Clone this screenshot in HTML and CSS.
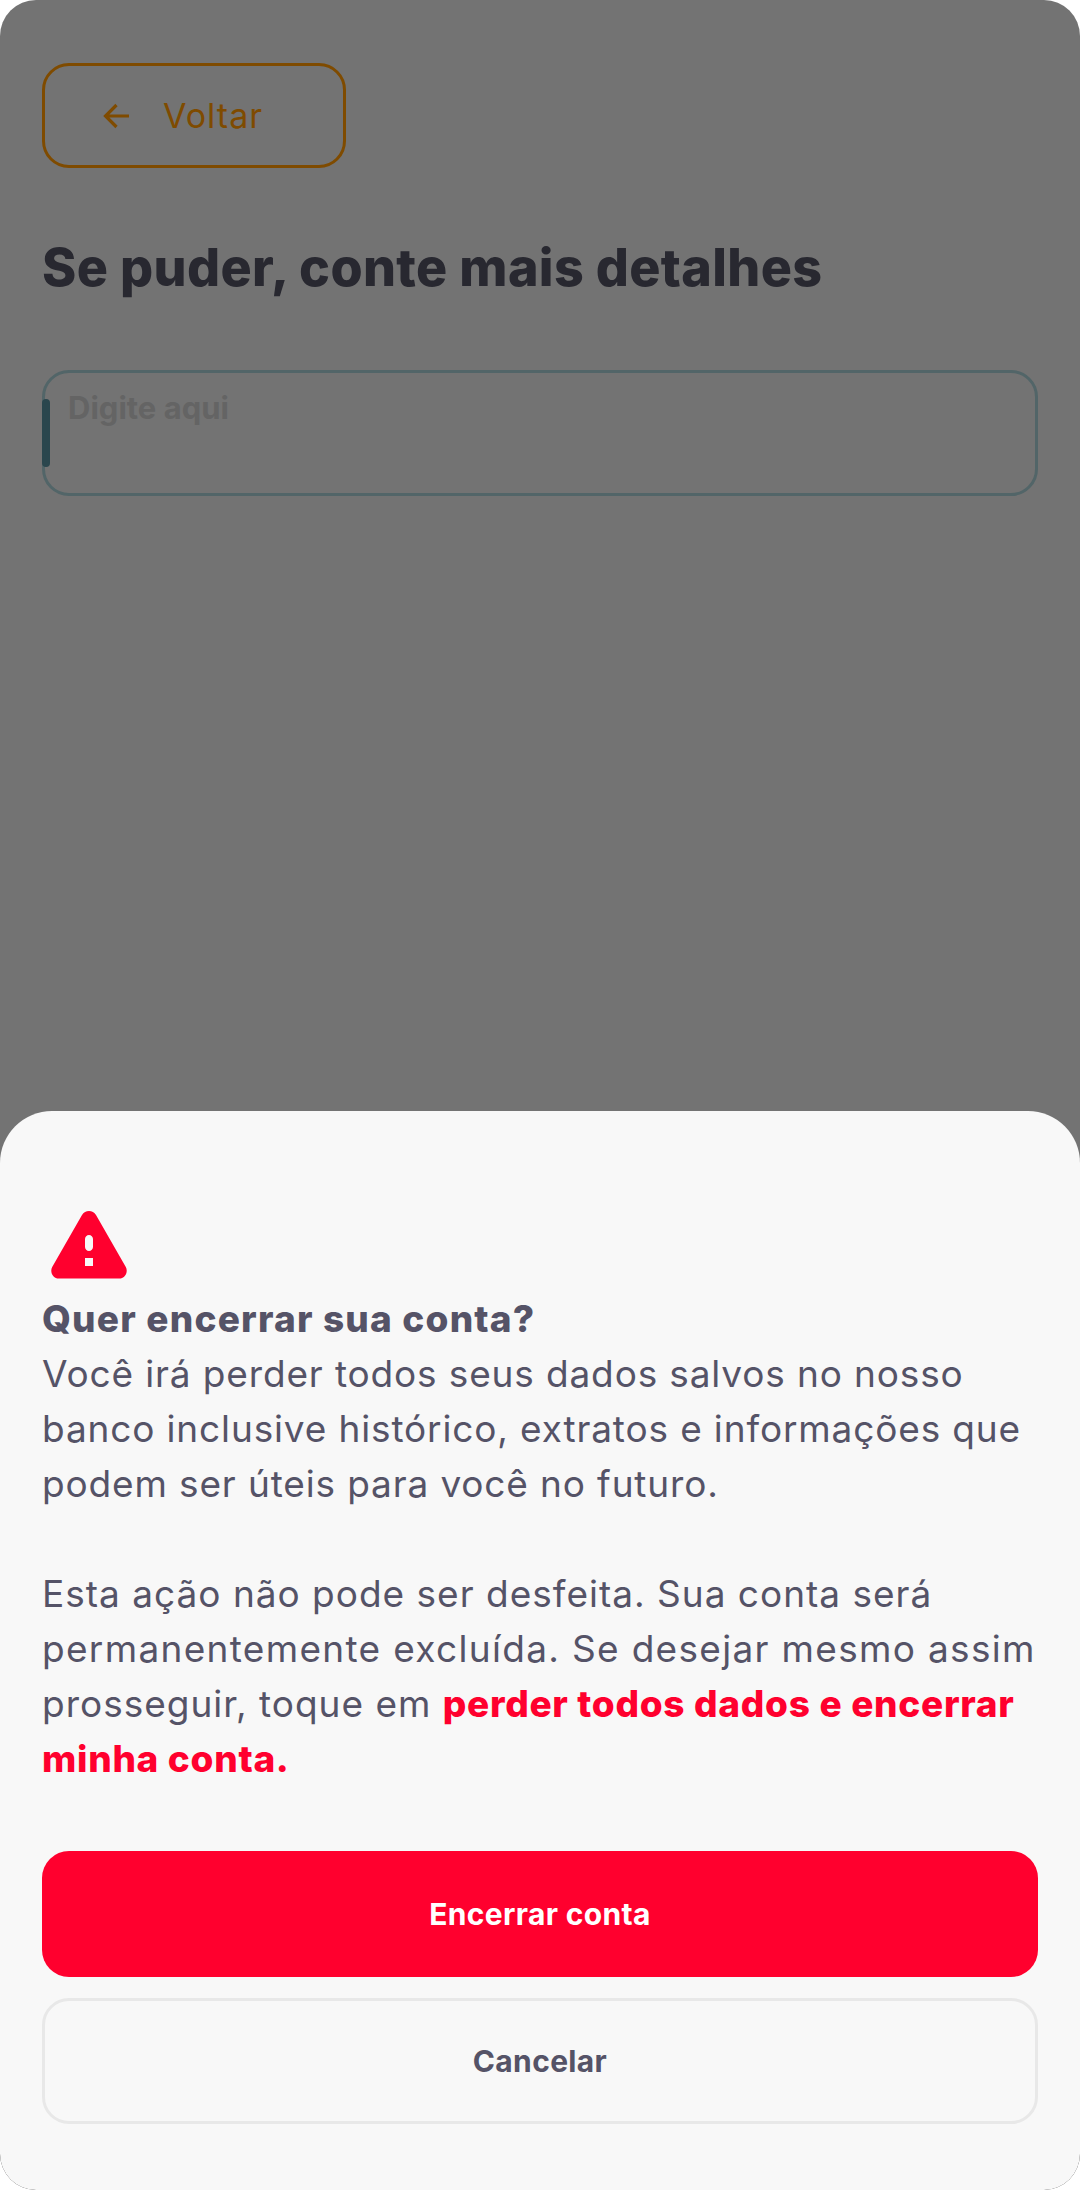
FILE: index.html
```html
<!DOCTYPE html>
<html lang="pt-BR">
<head>
<meta charset="utf-8">
<title>Encerrar conta</title>
<link rel="stylesheet" href="styles.css">
</head>
<body>
<div class="screen">
  <main class="page">
    <button class="back">
      <svg class="back-icon" viewBox="0 0 28 28" width="28" height="28" aria-hidden="true"><path d="M26 14H3M13.500 3 2.500 14l11 11" fill="none" stroke="currentColor" stroke-width="3.200"/></svg>
      <span>Voltar</span>
    </button>
    <h1 class="title">Se puder, conte mais detalhes</h1>
    <div class="field">
      <span class="caret"></span>
      <span class="placeholder">Digite aqui</span>
    </div>
  </main>
  <section class="sheet">
    <svg class="warn" viewBox="0 0 76 68" width="76" height="68" aria-hidden="true">
      <path fill-rule="evenodd" d="M31 4C34 -1.300 42 -1.300 45 4L74.800 56C77.500 61 74 67.500 68 67.500H8C2 67.500 -1.500 61 1.200 56ZM34 28V36C34 38.200 35.800 40 38 40S42 38.200 42 36V28C42 25.800 40.200 24 38 24S34 25.800 34 28ZM34 47V55H42V47Z" fill="#ff002e"/>
    </svg>
    <div class="message">
      <strong class="message-title">Quer encerrar sua conta?</strong><br>
      Você irá perder todos seus dados salvos no nosso<br>
      banco inclusive histórico, extratos e informações que<br>
      podem ser úteis para você no futuro.<br>
      <br>
      <span class="line-loose">Esta ação não pode ser desfeita. Sua conta será</span><br>
      <span class="line-wide">permanentemente excluída. Se desejar mesmo assim</span><br>
      <span class="line-loose">prosseguir, toque em</span> <strong class="danger">perder todos dados e encerrar<br>minha conta.</strong>
    </div>
    <div class="actions">
      <button class="btn btn-danger">Encerrar conta</button>
      <button class="btn btn-ghost">Cancelar</button>
    </div>
  </section>
</div>
</body>
</html>
```
FILE: styles.css
```css
* { box-sizing: border-box; }
html, body { margin: 0; padding: 0; background: #fff; }
body { font-family: Inter, "Noto Sans", sans-serif; }
button { font-family: inherit; }

.screen {
  position: relative;
  width: 1080px;
  height: 2190px;
  overflow: hidden;
  background: #737373;
  border-radius: 36px;
}
.page {
  display: flex;
  flex-direction: column;
  align-items: flex-start;
  padding: 63px 42px 0;
}
.back {
  display: flex;
  align-items: center;
  gap: 32px;
  width: 304px;
  height: 105px;
  padding: 0 0 0 58px;
  background: transparent;
  border: 3px solid #7f4b00;
  border-radius: 27px;
  color: #7f4b00;
  font-size: 34px;
  font-weight: 400;
  letter-spacing: 1px;
}
.back-icon { flex: none; }
.title {
  margin: 65px 0 0;
  color: #282830;
  font-size: 52px;
  line-height: 70px;
  font-weight: 800;
  letter-spacing: .35px;
}
.field {
  position: relative;
  width: 996px;
  height: 126px;
  margin-top: 67px;
  padding: 14px 23px;
  border: 3px solid #526568;
  border-radius: 27px;
}
.caret {
  position: absolute;
  left: -3px;
  top: 26px;
  width: 8px;
  height: 68px;
  border-radius: 4px;
  background: #2a464d;
}
.placeholder {
  color: #646464;
  font-size: 31px;
  line-height: 42px;
  font-weight: 700;
}

.sheet {
  position: absolute;
  left: 0;
  right: 0;
  bottom: 0;
  height: 1079px;
  padding: 100px 42px 0;
  background: #f8f8f8;
  border-radius: 52px 52px 36px 36px;
}
.warn { display: block; margin-left: 9px; }
.message {
  margin-top: 12px;
  color: #555367;
  font-size: 37px;
  line-height: 55px;
  font-weight: 400;
  letter-spacing: .86px;
  white-space: nowrap;
}
.message-title { font-weight: 800; letter-spacing: 1.2px; }
.line-loose { letter-spacing: 1px; }
.line-wide { letter-spacing: 1.32px; }
.danger { color: #ff002e; font-weight: 800; letter-spacing: .7px; }
.actions {
  display: flex;
  flex-direction: column;
  gap: 21px;
  margin-top: 65px;
}
.btn {
  width: 996px;
  height: 126px;
  border-radius: 27px;
  font-size: 30px;
  font-weight: 700;
  letter-spacing: .35px;
}
.btn-danger { background: #ff002e; color: #fff; border: 0; }
.btn-ghost { background: transparent; color: #555367; border: 3px solid #e8e8e8; }
```
